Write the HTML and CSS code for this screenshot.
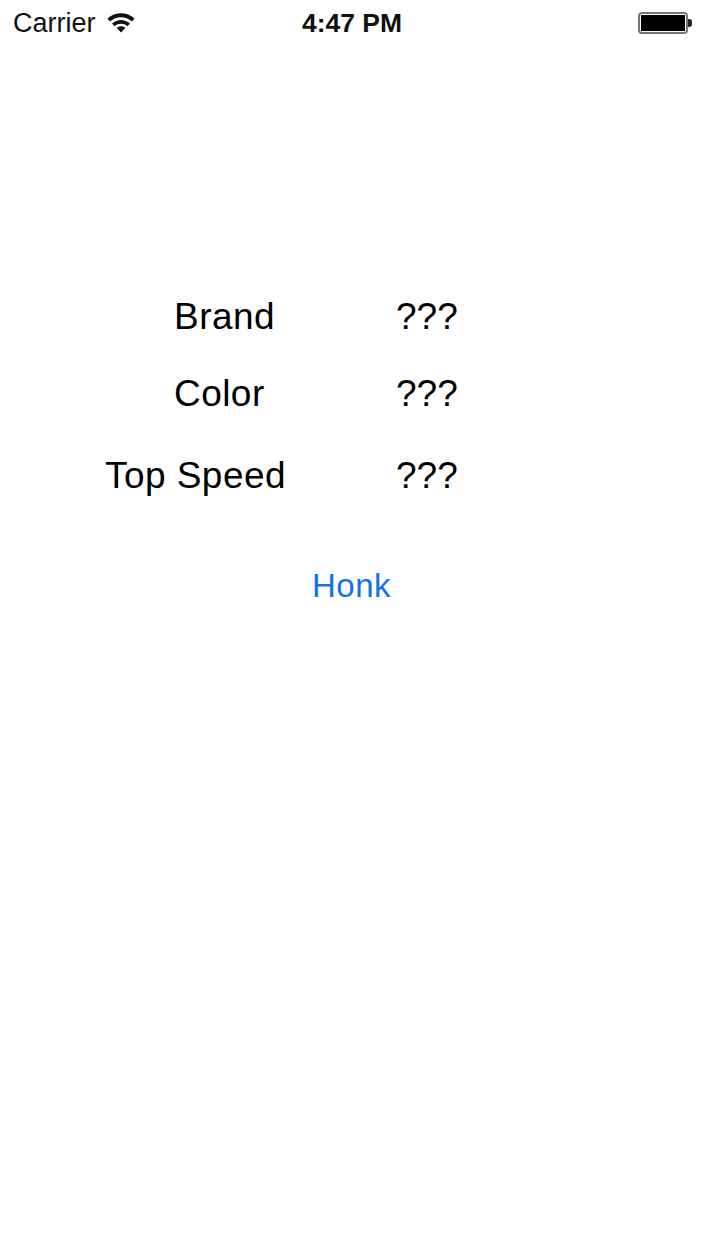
FILE: index.html
```html
<!DOCTYPE html>
<html lang="en">
<head>
    <meta charset="UTF-8">
    <title>Car</title>
    <link rel="stylesheet" href="styles.css">
</head>
<body>
    <header class="status-bar">
        <div class="status-left">
            <span>Carrier</span>
            <svg class="wifi" width="28" height="22" viewBox="0 0 28 22">
                <path d="M.5 6.500C8 -.5 20 -.5 27.500 6.500L25 9.500C18.500 3.800 9.500 3.800 3 9.500Z" fill="#111"/>
                <path d="M5 11.500C10.500 6.800 17.500 6.800 23 11.500L20.500 14.200C16.500 11 11.500 11 7.500 14.200Z" fill="#111"/>
                <path d="M9.500 15.800C12.300 13.800 15.700 13.800 18.500 15.800L14 20.500Z" fill="#111"/>
            </svg>
        </div>
        <div class="status-time">4:47 PM</div>
        <div class="status-right">
            <div class="battery"><div class="battery-fill"></div></div>
            <div class="battery-tip"></div>
        </div>
    </header>

    <main class="content">
        <div class="row row-brand">
            <div class="label label-short">Brand</div>
            <div class="value">???</div>
        </div>
        <div class="row row-color">
            <div class="label label-short">Color</div>
            <div class="value">???</div>
        </div>
        <div class="row row-speed">
            <div class="label">Top Speed</div>
            <div class="value">???</div>
        </div>
        <a class="honk" href="#">Honk</a>
    </main>
</body>
</html>
```

FILE: styles.css
```css
html, body {
    margin: 0;
    padding: 0;
    background: #fff;
    font-family: "Liberation Sans", Arial, sans-serif;
    color: #000;
}
.status-bar {
    display: grid;
    grid-template-columns: 1fr auto 1fr;
    align-items: center;
    height: 46px;
    padding: 0 13px;
    font-size: 27px;
    color: #111;
}
.status-left {
    display: flex;
    align-items: center;
    gap: 11px;
}
.wifi {
    margin-top: -1px;
}
.status-time {
    font-weight: bold;
    font-size: 26.500px;
}
.status-right {
    display: flex;
    align-items: center;
    justify-content: flex-end;
    margin-right: -1px;
}
.battery {
    box-sizing: border-box;
    width: 50px;
    height: 22px;
    padding: 1px;
    border: 2px solid #777;
    border-radius: 4px;
}
.battery-fill {
    height: 100%;
    background: #000;
}
.battery-tip {
    width: 4px;
    height: 8px;
    background: #222;
    border-radius: 0 3px 3px 0;
}
.content {
    display: flex;
    flex-direction: column;
    padding: 248px 0 0 105px;
    font-size: 37px;
}
.row {
    display: flex;
    height: 46px;
    line-height: 46px;
}
.row-color {
    margin-top: 31px;
}
.row-speed {
    margin-top: 36px;
}
.label {
    width: 291px;
    letter-spacing: .45px;
}
.label-short {
    box-sizing: border-box;
    padding-left: 69px;
}
.honk {
    margin: 64px 0 0 207px;
    color: #1272e6;
    font-size: 33px;
    line-height: 46px;
    letter-spacing: .5px;
    text-decoration: none;
}
```
